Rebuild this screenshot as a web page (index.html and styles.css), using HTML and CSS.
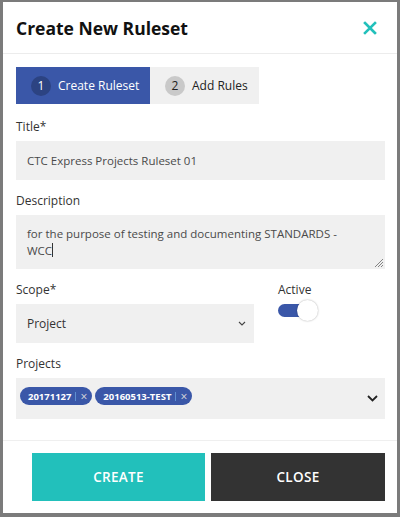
FILE: index.html
```html
<!DOCTYPE html>
<html>
<head>
<meta charset="utf-8">
<link rel="stylesheet" href="styles.css">
</head>
<body>
<div class="modal">
  <div class="header">
    <h1 class="title">Create New Ruleset</h1>
    <svg class="close-x" width="14" height="14" viewBox="0 0 14 14"><path d="M2 2L12 12M12 2L2 12" stroke="#22c0bb" stroke-width="2.6" stroke-linecap="square"/></svg>
  </div>
  <div class="body">
    <div class="stepper">
      <div class="step active"><span class="num">1</span>Create Ruleset</div>
      <div class="step"><span class="num">2</span>Add Rules</div>
    </div>
    <div class="field">
      <div class="label">Title*</div>
      <div class="input">CTC Express Projects Ruleset 01</div>
    </div>
    <div class="field">
      <div class="label">Description</div>
      <div class="input textarea">for the purpose of testing and documenting STANDARDS - WCC<span class="caret"></span>
        <svg class="grip" width="9" height="9" viewBox="0 0 9 9"><path d="M9 1L1 9M9 4L4 9M9 7L7 9" stroke="#777" stroke-width="0.9"/></svg>
      </div>
    </div>
    <div class="row">
      <div class="field scope">
        <div class="label">Scope*</div>
        <div class="input select">Project
          <svg class="chev-sm" width="8" height="5" viewBox="0 0 8 5"><path d="M1 1L4 4L7 1" stroke="#444" stroke-width="1.1" fill="none"/></svg>
        </div>
      </div>
      <div class="field active-field">
        <div class="label">Active</div>
        <div class="toggle"><span class="knob"></span></div>
      </div>
    </div>
    <div class="field last">
      <div class="label">Projects</div>
      <div class="input multi">
        <span class="chip">20171127<span class="sep"></span><span class="chip-x">×</span></span>
        <span class="chip">20160513-TEST<span class="sep"></span><span class="chip-x">×</span></span>
        <svg class="chev" width="11" height="7" viewBox="0 0 11 7"><path d="M1 1L5.5 5.5L10 1" stroke="#222" stroke-width="1.8" fill="none"/></svg>
      </div>
    </div>
  </div>
  <div class="footer">
    <button class="btn create">CREATE</button>
    <button class="btn close">CLOSE</button>
  </div>
</div>
</body>
</html>
```
FILE: styles.css
```css
* { box-sizing: border-box; }
html, body { margin: 0; padding: 0; }
body {
  background: #7b7b7b;
  width: 400px;
  height: 517px;
  overflow: hidden;
  font-family: "Open Sans", "DejaVu Sans", sans-serif;
  padding: 2px 3px 0 3px;
}
.modal {
  background: #fff;
  width: 394px;
  height: 511px;
  display: flex;
  flex-direction: column;
}
.header {
  height: 52px;
  flex: none;
  border-bottom: 1px solid #ececec;
  display: flex;
  align-items: center;
  justify-content: space-between;
  padding: 0 20px 0 13px;
}
.title {
  margin: 0;
  font-size: 17.5px;
  font-weight: 700;
  color: #111;
}
.body {
  padding: 13px 12px 0 13px;
}
.stepper {
  display: flex;
  height: 37px;
  margin-bottom: 16px;
}
.step {
  display: flex;
  align-items: center;
  background: #f0f0f0;
  color: #222;
  font-size: 12px;
  padding: 0 11px 0 15px;
  white-space: nowrap;
}
.step.active {
  background: #3a57a8;
  color: #fff;
  width: 134px;
}
.num {
  width: 20px;
  height: 20px;
  flex: none;
  border-radius: 50%;
  background: #c9c9c9;
  color: #222;
  display: inline-flex;
  align-items: center;
  justify-content: center;
  font-size: 12px;
  margin-right: 7px;
}
.step.active .num { background: #2c4382; color: #fff; }
.field { margin-bottom: 14px; }
.field.last { margin-bottom: 0; }
.label {
  font-size: 12px;
  color: #333;
  height: 14px;
  line-height: 14px;
  margin-bottom: 7px;
}
.input {
  background: #f0f0f0;
  height: 39px;
  font-size: 11.5px;
  color: #4a4a4a;
  padding: 0 11px;
  display: flex;
  align-items: center;
  position: relative;
}
.textarea {
  height: 54px;
  display: block;
  padding: 10px 24px 0 11px;
  line-height: 17px;
}
.caret {
  display: inline-block;
  width: 1px;
  height: 14px;
  background: #333;
  vertical-align: -2px;
}
.grip { position: absolute; right: 2px; bottom: 2px; }
.row { display: flex; gap: 24px; }
.scope { width: 238px; }
.select { justify-content: space-between; color: #333; font-size: 12px; padding-right: 8px; }
.active-field .label { margin-bottom: 7px; }
.toggle {
  width: 32px;
  height: 13px;
  background: #3a57a8;
  border-radius: 7px;
  position: relative;
}
.knob {
  position: absolute;
  right: -8px;
  top: -4px;
  width: 21px;
  height: 21px;
  border-radius: 50%;
  background: #fff;
  box-shadow: 0 0 2px rgba(0,0,0,0.35);
}
.multi {
  height: 41px;
  padding: 9px 4px 0 4px;
  gap: 3px;
  align-items: flex-start;
}
.chip {
  background: #3a57a8;
  color: #fff;
  font-size: 9.5px;
  font-weight: 700;
  height: 18px;
  border-radius: 9px;
  display: inline-flex;
  align-items: center;
  padding: 0 5px 0 8px;
}
.sep {
  width: 1px;
  height: 9px;
  background: #5f8fd1;
  margin: 0 4px;
}
.chip-x { font-weight: 400; font-size: 12px; color: #ddd; }
.chev { position: absolute; right: 7px; top: 17px; }
.footer {
  border-top: 1px solid #efefef;
  margin-top: 21px;
  display: flex;
  gap: 6px;
  padding: 12px 12px 0 29px;
}
.btn {
  border: 0;
  height: 48px;
  width: 173px;
  color: #fff;
  font-family: inherit;
  font-size: 13.5px;
  font-weight: 600;
  letter-spacing: 0.3px;
}
.create { background: #22c0bb; }
.close { background: #333; width: 174px; }
```
